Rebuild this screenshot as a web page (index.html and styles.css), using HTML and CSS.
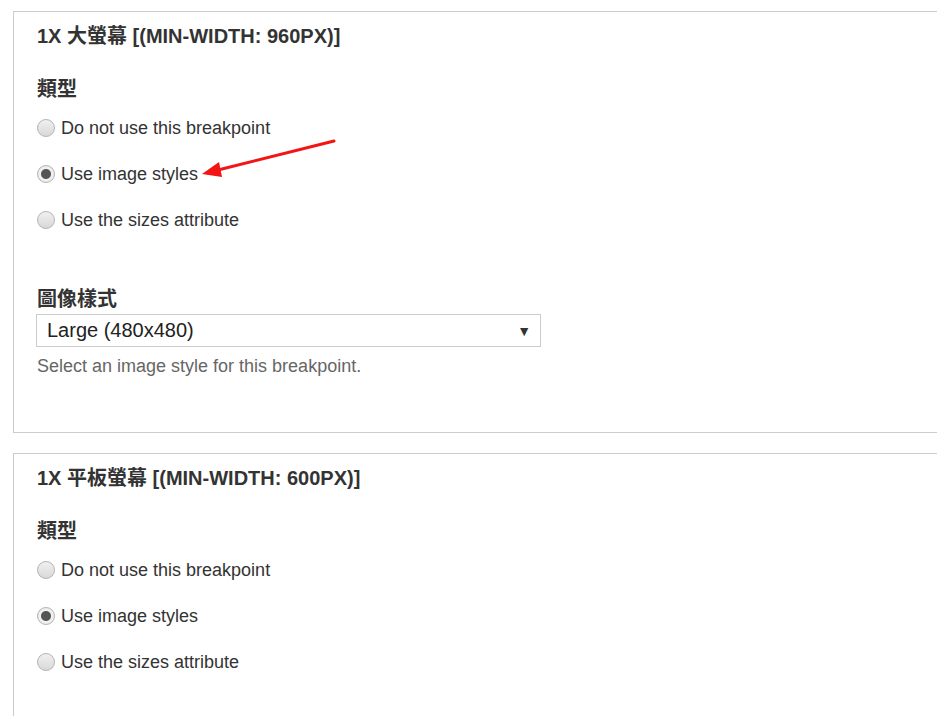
FILE: index.html
```html
<!DOCTYPE html>
<html lang="zh-Hant">
<head>
    <meta charset="UTF-8">
    <meta name="viewport" content="width=device-width, initial-scale=1.0">
    <title>Breakpoints</title>
    <link rel="stylesheet" href="styles.css">
</head>
<body>
    <div class="page">
        <div class="panel">
            <div class="panel-title">1x 大螢幕 [(min-width: 960px)]</div>
            <div class="group-label">類型</div>
            <label class="radio-row"><input class="radio" type="radio" name="bp1"> Do not use this breakpoint</label>
            <label class="radio-row"><input class="radio" type="radio" name="bp1" checked> Use image styles</label>
            <label class="radio-row"><input class="radio" type="radio" name="bp1"> Use the sizes attribute</label>

            <div class="group-label select-label">圖像樣式</div>
            <div class="select">
                <span>Large (480x480)</span>
                <span class="select-arrow">&#9660;</span>
            </div>
            <div class="help">Select an image style for this breakpoint.</div>
        </div>

        <div class="panel">
            <div class="panel-title">1x 平板螢幕 [(min-width: 600px)]</div>
            <div class="group-label">類型</div>
            <label class="radio-row"><input class="radio" type="radio" name="bp2"> Do not use this breakpoint</label>
            <label class="radio-row"><input class="radio" type="radio" name="bp2" checked> Use image styles</label>
            <label class="radio-row"><input class="radio" type="radio" name="bp2"> Use the sizes attribute</label>
            <div class="spacer"></div>
        </div>

        <!-- annotation arrow drawn over the form -->
        <svg class="note-arrow" width="937" height="716" viewBox="0 0 937 716">
            <line x1="334" y1="141" x2="214" y2="171" stroke="#f31414" stroke-width="3" stroke-linecap="round"/>
            <polygon points="202,174 219,162 222,177" fill="#f31414"/>
        </svg>
    </div>
</body>
</html>
```

FILE: styles.css
```css
html, body {
    margin: 0;
    padding: 0;
    overflow: hidden;
    background: #fff;
}
body {
    font-family: "Liberation Sans", Arial, "Noto Sans CJK TC", sans-serif;
    color: #333;
}
.page {
    position: relative;
    padding: 11px 0 0 13px;
    margin-right: -30px;
}
.panel {
    border: 1px solid #ccc;
    padding: 12px 23px 54px 23px;
    margin-bottom: 20px;
    background: #fff;
}
.panel-title {
    font-size: 20px;
    font-weight: bold;
    line-height: 24px;
    text-transform: uppercase;
}
.group-label {
    font-size: 20px;
    font-weight: bold;
    line-height: 24px;
    margin-top: 29px;
    margin-bottom: 15px;
}
.select-label {
    margin-top: 55px;
    margin-bottom: 3px;
}
.radio-row {
    display: flex;
    align-items: center;
    gap: 6px;
    font-size: 18px;
    line-height: 24px;
    margin-bottom: 22px;
}
.radio-row:last-of-type {
    margin-bottom: 0;
}
.radio {
    appearance: none;
    -webkit-appearance: none;
    width: 18px;
    height: 18px;
    margin: 0;
    border-radius: 50%;
    border: 1px solid #b4b4b4;
    background: linear-gradient(#f0f0f0, #d8d8d8);
    box-sizing: border-box;
}
.radio:checked {
    background: radial-gradient(circle, #555 0 4.5px, #f2f2f2 5.5px, #e4e4e4 100%);
}
.select {
    display: flex;
    justify-content: space-between;
    align-items: center;
    width: 505px;
    height: 33px;
    box-sizing: border-box;
    border: 1px solid #ccc;
    margin-left: -1px;
    padding: 0 9px 0 10px;
    font-size: 20px;
    color: #222;
}
.select-arrow {
    font-size: 14px;
    color: #333;
}
.help {
    font-size: 18px;
    line-height: 24px;
    margin-top: 7px;
    color: #666;
}
.spacer {
    height: 60px;
}
.note-arrow {
    position: absolute;
    left: 0;
    top: 0;
    pointer-events: none;
}
```
